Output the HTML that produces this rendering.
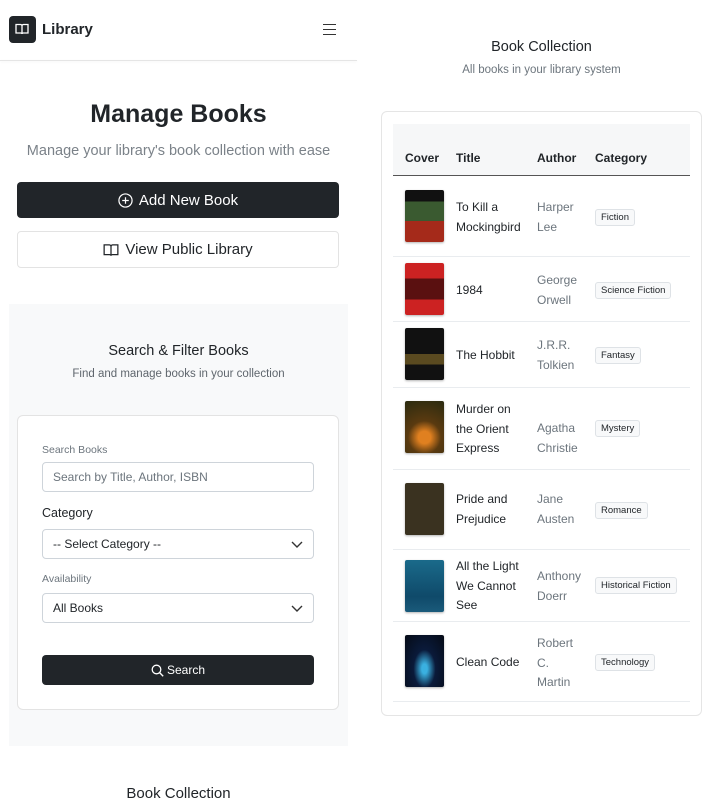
<!DOCTYPE html>
<html><head><meta charset="utf-8"><style>
*{box-sizing:border-box;margin:0;padding:0}
body{width:718px;height:796px;overflow:hidden;background:#fff;font-family:"Liberation Sans","DejaVu Sans",sans-serif;color:#212529;position:relative}
.a{position:absolute}
.c{text-align:center}
.g{color:#6c757d}
.btn{position:absolute;border-radius:4px;display:flex;align-items:center;justify-content:center;gap:6px}
.inp{position:absolute;left:42px;width:272px;height:30px;border:1px solid #ced4da;border-radius:4px;font-size:12px;padding-left:10px;display:flex;align-items:center}
.lbl{position:absolute;left:42px;font-size:10.5px;color:#6c757d}
.chev{position:absolute;right:10px;top:9px}
.cell{position:absolute;font-size:12px;line-height:19.5px}
.badge{position:absolute;left:595px;font-size:9.5px;border:1px solid #dee2e6;background:#f8f9fa;border-radius:3px;padding:2px 5px;color:#212529}
.cov{position:absolute;left:405px;width:39px;height:52px;border-radius:2px;box-shadow:0 1px 2px rgba(0,0,0,.3)}
.hr{position:absolute;left:393px;width:297px;height:1px;background:#e9ecef}
</style></head><body>
<div class="a" style="left:9px;top:16px;width:27px;height:27px;background:#212529;border-radius:4px"></div>
<svg class="a" style="left:15px;top:23px" width="14" height="12" viewBox="0 0 14 12"><path d="M1 1.5h4.5c.8 0 1.5.6 1.5 1.4V11c0-.7-.6-1-1.3-1H1zM13 1.5H8.5c-.8 0-1.5.6-1.5 1.4V11c0-.7.6-1 1.3-1H13z" fill="none" stroke="#fff" stroke-width="1.3"/></svg>
<div class="a" style="left:42px;top:21px;font-size:15px;font-weight:bold">Library</div>
<div class="a" style="left:323px;top:24px;width:13px;height:1.3px;background:#333;box-shadow:0 5px 0 #333,0 10px 0 #333"></div>
<div class="a" style="left:0;top:60px;width:357px;height:1px;background:#e5e5e5;box-shadow:0 1px 2px rgba(0,0,0,.05)"></div>
<div class="a c" style="left:0;width:357px;top:100px;font-size:25px;font-weight:bold">Manage Books</div>
<div class="a c g" style="left:0;width:357px;top:143px;font-size:14.5px;color:#7b8289">Manage your library's book collection with ease</div>
<div class="btn" style="left:17px;top:182px;width:322px;height:36px;background:#212529;color:#fff;font-size:15px">
<svg width="15" height="15" viewBox="0 0 16 16"><circle cx="8" cy="8" r="7" fill="none" stroke="#fff" stroke-width="1.3"/><path d="M8 4.5v7M4.5 8h7" stroke="#fff" stroke-width="1.3"/></svg>Add New Book</div>
<div class="btn" style="left:17px;top:231px;width:322px;height:37px;border:1px solid #e3e3e3;font-size:15px">
<svg width="16" height="14" viewBox="0 0 14 12"><path d="M1 1.5h4.5c.8 0 1.5.6 1.5 1.4V11c0-.7-.6-1-1.3-1H1zM13 1.5H8.5c-.8 0-1.5.6-1.5 1.4V11c0-.7.6-1 1.3-1H13z" fill="none" stroke="#212529" stroke-width="1.1"/></svg>View Public Library</div>
<div class="a" style="left:9px;top:304px;width:339px;height:442px;background:#f8f9fa"></div>
<div class="a c" style="left:9px;width:339px;top:343px;font-size:14.5px">Search &amp; Filter Books</div>
<div class="a c g" style="left:9px;width:339px;top:368px;font-size:11.5px;color:#5f666d">Find and manage books in your collection</div>
<div class="a" style="left:17px;top:415px;width:322px;height:295px;background:#fff;border:1px solid #e3e3e3;border-radius:6px"></div>
<div class="lbl" style="top:444px">Search Books</div>
<div class="inp" style="top:462px;color:#6c757d">Search by Title, Author, ISBN</div>
<div class="a" style="left:42px;top:506px;font-size:12.5px">Category</div>
<div class="inp" style="top:529px">-- Select Category --<svg class="chev" width="12" height="10" viewBox="0 0 12 10"><path d="M1 3l5 5 5-5" fill="none" stroke="#333" stroke-width="1.4"/></svg></div>
<div class="lbl" style="top:573px">Availability</div>
<div class="inp" style="top:593px">All Books<svg class="chev" width="12" height="10" viewBox="0 0 12 10"><path d="M1 3l5 5 5-5" fill="none" stroke="#333" stroke-width="1.4"/></svg></div>
<div class="btn" style="left:42px;top:655px;width:272px;height:30px;background:#212529;color:#fff;font-size:12px;gap:3px">
<svg width="13" height="13" viewBox="0 0 13 13"><circle cx="5.5" cy="5.5" r="4.3" fill="none" stroke="#fff" stroke-width="1.3"/><path d="M8.6 8.6l3.6 3.6" stroke="#fff" stroke-width="1.4"/></svg>Search</div>
<div class="a c" style="left:0;width:357px;top:785px;font-size:15px">Book Collection</div>
<div class="a c" style="left:381px;width:321px;top:39px;font-size:14.5px">Book Collection</div>
<div class="a c g" style="left:381px;width:321px;top:64px;font-size:11.5px">All books in your library system</div>
<div class="a" style="left:381px;top:111px;width:321px;height:605px;border:1px solid #e5e5e5;border-radius:6px"></div>
<div class="a" style="left:393px;top:124px;width:297px;height:52px;background:#f6f7f8;border-bottom:1.5px solid #555"></div>
<div class="cell" style="left:405px;top:149px;font-weight:bold">Cover</div>
<div class="cell" style="left:456px;top:149px;font-weight:bold">Title</div>
<div class="cell" style="left:537px;top:149px;font-weight:bold">Author</div>
<div class="cell" style="left:595px;top:149px;font-weight:bold">Category</div>

<div class="cov" style="top:190px;background:linear-gradient(#111 0 22%,#3a5a30 22% 60%,#a52a1a 60%)"></div>
<div class="cell" style="left:456px;top:198px">To Kill a<br>Mockingbird</div>
<div class="cell g" style="left:537px;top:198px">Harper<br>Lee</div>
<div class="badge" style="top:209px">Fiction</div>
<div class="hr" style="top:256px"></div>

<div class="cov" style="top:263px;background:linear-gradient(#c22 0 30%,#5a1010 30% 70%,#c22 70%)"></div>
<div class="cell" style="left:456px;top:281px">1984</div>
<div class="cell g" style="left:537px;top:271px">George<br>Orwell</div>
<div class="badge" style="top:282px">Science Fiction</div>
<div class="hr" style="top:321px"></div>

<div class="cov" style="top:328px;background:linear-gradient(#111 0 50%,#5a4a20 50% 70%,#111 70%)"></div>
<div class="cell" style="left:456px;top:346px">The Hobbit</div>
<div class="cell g" style="left:537px;top:336px">J.R.R.<br>Tolkien</div>
<div class="badge" style="top:347px">Fantasy</div>
<div class="hr" style="top:387px"></div>

<div class="cov" style="top:401px;background:radial-gradient(circle at 50% 70%,#e08020 0 15%,#5a3a10 40%,#2a2a10)"></div>
<div class="cell" style="left:456px;top:400px">Murder on<br>the Orient<br>Express</div>
<div class="cell g" style="left:537px;top:419px">Agatha<br>Christie</div>
<div class="badge" style="top:420px">Mystery</div>
<div class="hr" style="top:469px"></div>

<div class="cov" style="top:483px;background:#3a3220"></div>
<div class="cell" style="left:456px;top:490px">Pride and<br>Prejudice</div>
<div class="cell g" style="left:537px;top:490px">Jane<br>Austen</div>
<div class="badge" style="top:502px">Romance</div>
<div class="hr" style="top:549px"></div>

<div class="cov" style="top:560px;background:linear-gradient(#1a6a8a,#0f4a6a 70%,#1a5a7a)"></div>
<div class="cell" style="left:456px;top:557px">All the Light<br>We Cannot<br>See</div>
<div class="cell g" style="left:537px;top:567px">Anthony<br>Doerr</div>
<div class="badge" style="top:577px">Historical Fiction</div>
<div class="hr" style="top:621px"></div>

<div class="cov" style="top:635px;background:radial-gradient(ellipse at 50% 65%,#3ab0e0 0 10%,#0a1a3a 40%,#050a15)"></div>
<div class="cell" style="left:456px;top:653px">Clean Code</div>
<div class="cell g" style="left:537px;top:634px">Robert<br>C.<br>Martin</div>
<div class="badge" style="top:654px">Technology</div>
<div class="hr" style="top:701px"></div>
</body></html>
